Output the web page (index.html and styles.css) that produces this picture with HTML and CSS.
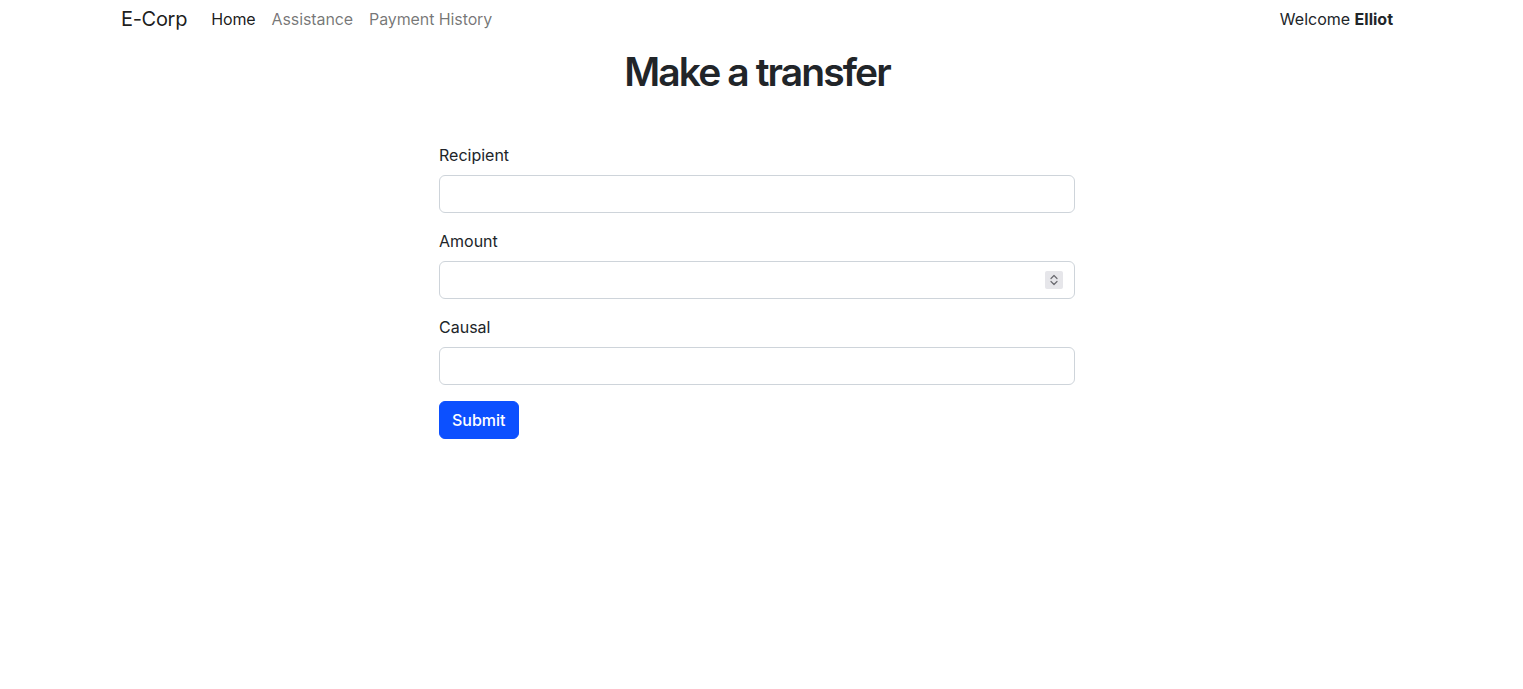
FILE: index.html
```html
<!DOCTYPE html>
<html lang="en">
<head>
<meta charset="utf-8">
<title>E-Corp - Make a transfer</title>
<link rel="stylesheet" href="styles.css">
</head>
<body>
<div class="page">
  <nav class="navbar">
    <div class="nav-left">
      <a class="brand" href="#">E-Corp</a>
      <ul class="nav-links">
        <li><a class="nav-link active" href="#">Home</a></li>
        <li><a class="nav-link" href="#">Assistance</a></li>
        <li><a class="nav-link" href="#">Payment History</a></li>
      </ul>
    </div>
    <div class="welcome">Welcome <strong>Elliot</strong></div>
  </nav>
  <main class="container">
    <h1 class="title">Make a transfer</h1>
    <form class="form">
      <div class="field">
        <label class="label" for="recipient">Recipient</label>
        <input class="input" id="recipient" type="text">
      </div>
      <div class="field">
        <label class="label" for="amount">Amount</label>
        <div class="input-wrap">
          <input class="input" id="amount" type="text" inputmode="decimal">
          <span class="spinner">
            <svg width="12" height="16" viewBox="0 0 12 16"><path d="M3 6.5 L6 3.5 L9 6.5 M3 9.5 L6 12.5 L9 9.5" fill="none" stroke="#6b6b70" stroke-width="1.2" stroke-linecap="round" stroke-linejoin="round"/></svg>
          </span>
        </div>
      </div>
      <div class="field">
        <label class="label" for="causal">Causal</label>
        <input class="input" id="causal" type="text">
      </div>
      <button class="btn" type="button">Submit</button>
    </form>
  </main>
</div>
</body>
</html>
```
FILE: styles.css
```css
* { box-sizing: border-box; }
html, body { margin: 0; padding: 0; background: #fff; }
body {
  font-family: Inter, "Liberation Sans", sans-serif;
  font-size: 16px;
  line-height: 1.5;
  color: #212529;
}
.page { width: 1514px; }
.navbar {
  width: 1320px;
  margin: 0 auto;
  padding: 3px 24px 0 24px;
  display: flex;
  justify-content: space-between;
  align-items: center;
  height: 34px;
}
.nav-left { display: flex; align-items: center; letter-spacing: -0.1px; }
.brand {
  font-size: 20px;
  color: rgba(0,0,0,.9);
  text-decoration: none;
  margin-right: 16px;
  line-height: 24px;
  letter-spacing: -0.3px;
}
.nav-links { display: flex; list-style: none; margin: 0; padding: 0; }
.nav-link {
  display: block;
  padding: 0 8px;
  color: rgba(0,0,0,.55);
  text-decoration: none;
}
.nav-link.active { color: rgba(0,0,0,.9); }
.welcome { color: #212529; }
.welcome strong { font-weight: 700; }
.container { width: 1320px; margin: 0 auto; padding: 0 12px; }
.title {
  text-align: center;
  font-size: 39px;
  font-weight: 600;
  line-height: 48px;
  letter-spacing: -1.9px;
  margin: 14px 0 47px;
}
.form { width: 636px; margin: 0 auto; }
.field { margin-bottom: 16px; }
.label { display: block; margin-bottom: 8px; }
.input-wrap { position: relative; }
.input {
  display: block;
  width: 100%;
  height: 38px;
  padding: 6px 12px;
  font: inherit;
  border: 1px solid #ced4da;
  border-radius: 6px;
  background: #fff;
}
.spinner {
  position: absolute;
  right: 12px;
  top: 10px;
  width: 18px;
  height: 18px;
  background: #e6e6ea;
  border-radius: 2px;
  display: flex;
  align-items: center;
  justify-content: center;
}
.btn {
  font: inherit;
  font-weight: 500;
  color: #fff;
  background: #0c50ff;
  border: 1px solid #0c50ff;
  border-radius: 6px;
  height: 38px;
  padding: 6px 12px;
  cursor: pointer;
}
```
